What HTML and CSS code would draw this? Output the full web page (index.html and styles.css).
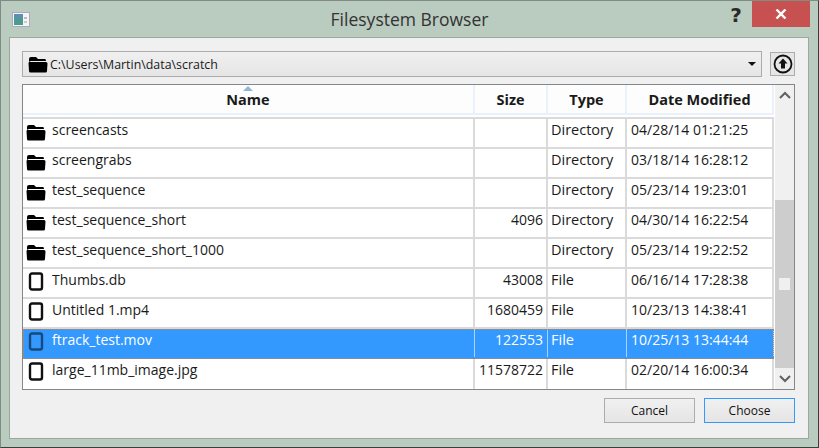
FILE: index.html
```html
<!DOCTYPE html>
<html lang="en">
<head>
    <meta charset="UTF-8">
    <title>Filesystem Browser</title>
    <link rel="stylesheet" href="styles.css">
</head>
<body>
    <svg class="defs" width="0" height="0">
        <symbol id="folder" viewBox="0 0 20 17">
            <path d="M1 3 Q1 1 3 1 H8 L10 3 H17 Q18 3 18 5 H3 Q1 5 1 7 Z M0.5 7 Q0.5 6 2 6 H18 Q19.5 6 19.5 7.500 L19 15 Q19 16.500 17.500 16.500 H2.500 Q1 16.500 1 15 Z" fill="#000"/>
        </symbol>
        <symbol id="file" viewBox="0 0 16 19">
            <rect x="2" y="1.500" width="12" height="16" rx="2" fill="none" stroke="currentColor" stroke-width="2.400"/>
        </symbol>
    </svg>

    <div class="window">
        <div class="titlebar">
            <svg class="app-icon" width="18" height="15" viewBox="0 0 18 15">
                <rect x="0.500" y="0.500" width="17" height="14" fill="#f4f6f5" stroke="#aab"/>
                <rect x="2" y="2" width="9" height="11" fill="#4f9a8f"/>
                <rect x="2" y="2" width="9" height="4" fill="#5d8fb5"/>
                <rect x="12" y="5" width="3" height="2" fill="#bbb"/>
                <rect x="12" y="9" width="3" height="2" fill="#ccc"/>
            </svg>
            <div class="title">Filesystem Browser</div>
            <div class="help">?</div>
            <div class="close">
                <svg width="12" height="10" viewBox="0 0 12 10">
                    <path d="M1.500 0.500 L10.500 9.500 M10.500 0.500 L1.500 9.500" stroke="#fff" stroke-width="2.400" fill="none"/>
                </svg>
            </div>
        </div>

        <div class="panel">
            <div class="path-row">
                <div class="combo">
                    <svg class="folder-icon" width="20" height="17"><use href="#folder"/></svg>
                    <span class="combo-text">C:\Users\Martin\data\scratch</span>
                    <span class="combo-arrow"></span>
                </div>
                <button class="up-btn">
                    <svg width="20" height="20" viewBox="0 0 20 20">
                        <circle cx="10" cy="10" r="8.500" fill="none" stroke="#111" stroke-width="1.800"/>
                        <path d="M10 4.500 L14.500 9.500 H12 V14.500 H8 V9.500 H5.500 Z" fill="#111"/>
                    </svg>
                </button>
            </div>

            <div class="list">
                <div class="list-main">
                    <div class="row head">
                        <div class="cell name">Name<span class="sort"></span></div>
                        <div class="cell size">Size</div>
                        <div class="cell type">Type</div>
                        <div class="cell date">Date Modified</div>
                    </div>
                    <div class="row">
                        <div class="cell name"><svg class="folder-icon" width="20" height="17"><use href="#folder"/></svg>screencasts</div>
                        <div class="cell size"></div>
                        <div class="cell type">Directory</div>
                        <div class="cell date">04/28/14 01:21:25</div>
                    </div>
                    <div class="row">
                        <div class="cell name"><svg class="folder-icon" width="20" height="17"><use href="#folder"/></svg>screengrabs</div>
                        <div class="cell size"></div>
                        <div class="cell type">Directory</div>
                        <div class="cell date">03/18/14 16:28:12</div>
                    </div>
                    <div class="row">
                        <div class="cell name"><svg class="folder-icon" width="20" height="17"><use href="#folder"/></svg>test_sequence</div>
                        <div class="cell size"></div>
                        <div class="cell type">Directory</div>
                        <div class="cell date">05/23/14 19:23:01</div>
                    </div>
                    <div class="row">
                        <div class="cell name"><svg class="folder-icon" width="20" height="17"><use href="#folder"/></svg>test_sequence_short</div>
                        <div class="cell size">4096</div>
                        <div class="cell type">Directory</div>
                        <div class="cell date">04/30/14 16:22:54</div>
                    </div>
                    <div class="row">
                        <div class="cell name"><svg class="folder-icon" width="20" height="17"><use href="#folder"/></svg>test_sequence_short_1000</div>
                        <div class="cell size"></div>
                        <div class="cell type">Directory</div>
                        <div class="cell date">05/23/14 19:22:52</div>
                    </div>
                    <div class="row">
                        <div class="cell name"><svg class="file-icon" width="16" height="19"><use href="#file"/></svg>Thumbs.db</div>
                        <div class="cell size">43008</div>
                        <div class="cell type">File</div>
                        <div class="cell date">06/16/14 17:28:38</div>
                    </div>
                    <div class="row">
                        <div class="cell name"><svg class="file-icon" width="16" height="19"><use href="#file"/></svg>Untitled 1.mp4</div>
                        <div class="cell size">1680459</div>
                        <div class="cell type">File</div>
                        <div class="cell date">10/23/13 14:38:41</div>
                    </div>
                    <div class="row selected">
                        <div class="cell name"><svg class="file-icon" width="16" height="19"><use href="#file"/></svg>ftrack_test.mov</div>
                        <div class="cell size">122553</div>
                        <div class="cell type">File</div>
                        <div class="cell date">10/25/13 13:44:44</div>
                    </div>
                    <div class="row">
                        <div class="cell name"><svg class="file-icon" width="16" height="19"><use href="#file"/></svg>large_11mb_image.jpg</div>
                        <div class="cell size">11578722</div>
                        <div class="cell type">File</div>
                        <div class="cell date">02/20/14 16:00:34</div>
                    </div>
                </div>
                <div class="scrollbar">
                    <div class="scroll-arrow up">
                        <svg width="12" height="8" viewBox="0 0 12 8"><path d="M1 7 L6 2 L11 7" fill="none" stroke="#606060" stroke-width="2"/></svg>
                    </div>
                    <div class="scroll-track">
                        <div class="scroll-thumb"><span class="scroll-grip"></span></div>
                    </div>
                    <div class="scroll-arrow down">
                        <svg width="12" height="8" viewBox="0 0 12 8"><path d="M1 1 L6 6 L11 1" fill="none" stroke="#606060" stroke-width="2"/></svg>
                    </div>
                </div>
            </div>

            <div class="buttons">
                <button class="btn">Cancel</button>
                <button class="btn primary">Choose</button>
            </div>
        </div>
    </div>
</body>
</html>
```

FILE: styles.css
```css
html, body {
    margin: 0;
    padding: 0;
}

body {
    width: 819px;
    height: 448px;
    overflow: hidden;
    font-family: "Open Sans", "Liberation Sans", sans-serif;
    font-size: 12.500px;
    color: #1a1a1a;
}

.defs {
    display: block;
    height: 0;
}

.window {
    box-sizing: border-box;
    width: 819px;
    height: 448px;
    background: #bacbbf;
    border: 1px solid #7f8c84;
    border-right-color: #39403c;
    border-bottom-color: #39403c;
    display: flex;
    flex-direction: column;
}

.titlebar {
    height: 36px;
    flex: none;
    display: flex;
    align-items: flex-start;
    position: relative;
}

.app-icon {
    margin: 11px 0 0 11px;
}

.title {
    position: absolute;
    left: 0;
    right: 0;
    top: 6px;
    text-align: center;
    font-size: 17.500px;
    color: #333;
}

.help {
    margin: 0 0 0 auto;
    width: 28px;
    padding-right: 2px;
    text-align: center;
    font-family: "DejaVu Sans", sans-serif;
    font-weight: bold;
    font-size: 20px;
    line-height: 28px;
    color: #2a2a2a;
}

.close {
    width: 58px;
    height: 26px;
    margin-right: 8px;
    background: #c75050;
    display: flex;
    align-items: center;
    justify-content: center;
}

.panel {
    flex: 1;
    margin: 0 9px 8px 8px;
    background: #f0f0f0;
    border: 1px solid #9ba8a0;
    padding: 13px 13px 14px 12px;
    display: flex;
    flex-direction: column;
}

.path-row {
    display: flex;
    align-items: center;
    justify-content: space-between;
    height: 26px;
}

.combo {
    box-sizing: border-box;
    width: 740px;
    height: 26px;
    border: 1px solid #acacac;
    background: linear-gradient(#f0f0f0, #e5e5e5);
    display: flex;
    align-items: center;
    padding: 0 5px 0 5px;
}

.combo .folder-icon {
    margin: 1px 2px 0 0;
}

.combo-text {
    flex: 1;
    font-size: 12.400px;
}

.combo-arrow {
    width: 0;
    height: 0;
    border-left: 4px solid transparent;
    border-right: 4px solid transparent;
    border-top: 4px solid #111;
}

.up-btn {
    box-sizing: border-box;
    width: 25px;
    height: 24px;
    padding: 0;
    border: 1px solid #acacac;
    background: #e6e6e6;
    display: flex;
    align-items: center;
    justify-content: center;
}

.list {
    box-sizing: border-box;
    height: 306px;
    margin-top: 7px;
    border: 1px solid #82878c;
    background: #fff;
    display: flex;
}

.list-main {
    width: 751px;
}

.row {
    box-sizing: border-box;
    height: 30px;
    display: grid;
    grid-template-columns: 452px 73px 79px 147px;
    grid-template-rows: 100%;
    border-bottom: 2px solid #dadada;
}

.row:last-child {
    border-bottom: none;
}

.cell {
    box-sizing: border-box;
    border-right: 2px solid #dadada;
    padding: 1px 3px 0 3px;
    display: flex;
    align-items: flex-start;
    white-space: nowrap;
    font-size: 14px;
    line-height: 20px;
}

.cell.size {
    justify-content: flex-end;
}

.cell.type {
    font-size: 14.500px;
}

.cell.date {
    padding-left: 4px;
}

.cell.name .folder-icon {
    margin: 4px 6px 0 0;
}

.cell.name .file-icon {
    margin: 2px 8px 0 2px;
}

.file-icon {
    color: #111;
}

.head {
    height: 30px;
    background: #fdfdfd;
    border-bottom: 2px solid #e9f1fc;
    box-shadow: 0 2px 0 #fff, 0 4px 0 #dadada;
    margin-bottom: 4px;
}

.head .cell {
    justify-content: center;
    align-items: center;
    font-weight: bold;
    border-right: 2px solid #e9f1fc;
    padding: 2px 0 0 0;
    position: relative;
    font-size: 14.500px;
}

.sort {
    position: absolute;
    top: 1px;
    left: 50%;
    margin-left: -5px;
    width: 0;
    height: 0;
    border-left: 5px solid transparent;
    border-right: 5px solid transparent;
    border-bottom: 5px solid #8fb8d8;
}

.selected {
    background: #3399ff;
    border-bottom-color: #3399ff;
    outline: 1px dotted #c9853f;
    outline-offset: -1px;
}

.selected .cell {
    color: #fff;
    border-right: 1px solid #a9d3ff;
    padding-right: 4px;
}

.selected .file-icon {
    color: #17497c;
}

.scrollbar {
    flex: 1;
    margin-left: 1px;
    display: flex;
    flex-direction: column;
    background: #f0f0f0;
}

.scroll-arrow {
    flex: none;
    display: flex;
    align-items: center;
    justify-content: center;
}

.scroll-arrow.up {
    height: 20px;
}

.scroll-arrow.down {
    height: 21px;
}

.scroll-track {
    flex: 1;
    display: flex;
    flex-direction: column;
    justify-content: flex-end;
}

.scroll-thumb {
    height: 168px;
    background: #cdcdcd;
    display: flex;
    align-items: center;
    justify-content: center;
}

.scroll-grip {
    width: 11px;
    height: 12px;
    background: #f0f0f0;
}

.buttons {
    display: flex;
    justify-content: flex-end;
    gap: 9px;
    margin-top: 8px;
}

.btn {
    box-sizing: border-box;
    width: 91px;
    height: 25px;
    padding: 0;
    border: 1px solid #acacac;
    background: linear-gradient(#f0f0f0, #e5e5e5);
    font-family: inherit;
    font-size: 12px;
    color: #111;
}

.btn.primary {
    border-color: #3399ff;
}
```
